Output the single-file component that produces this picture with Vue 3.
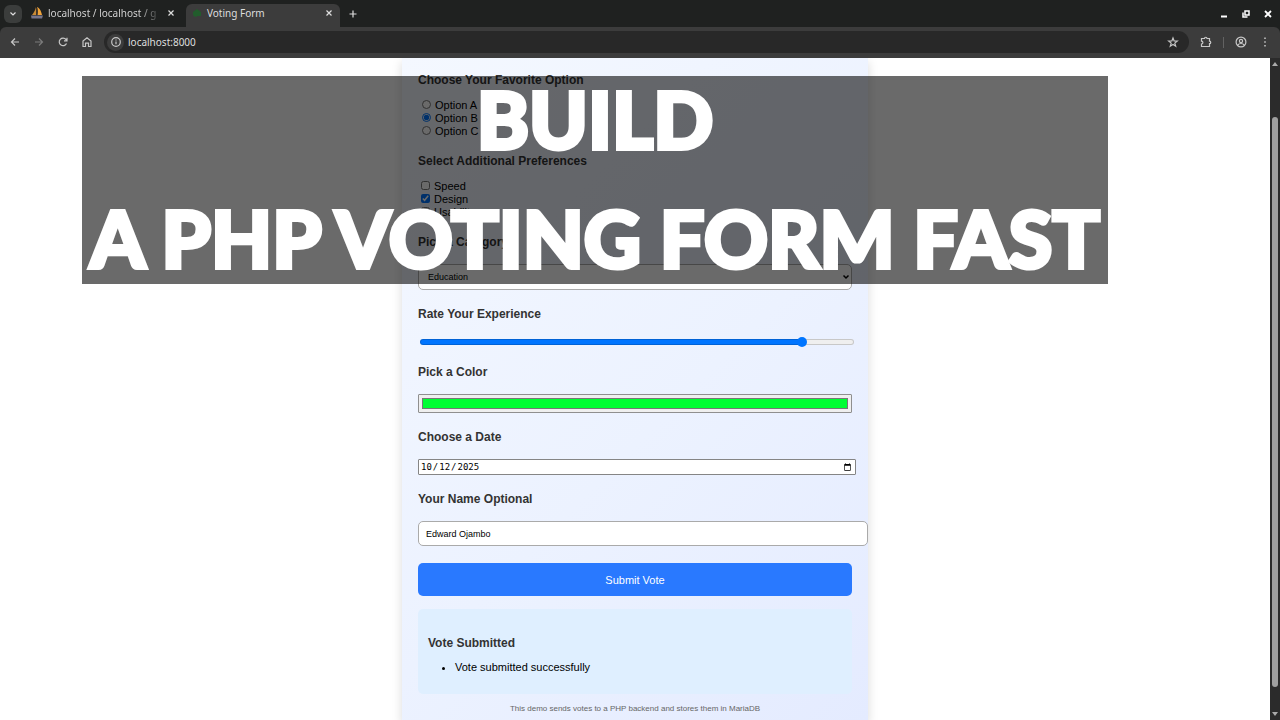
<script setup>
import { ref, computed } from 'vue'

const options = ['Option A', 'Option B', 'Option C']
const preferences = ['Speed', 'Design', 'Usability']
const option = ref('Option B')
const chosen = ref(['Design'])
const category = ref('Education')
const rating = ref(89)
const color = ref('#00ff33')
const date = ref('2025-10-12')
const name = ref('Edward Ojambo')
const url = ref('localhost:8000')
const fill = computed(() => ({ '--fill': rating.value + '%' }))
</script>

<template>
  <div class="browser">
    <header>
      <div class="tabs">
        <button class="menu" aria-label="Search tabs">
          <svg width="8" height="6" viewBox="0 0 8 6"><path d="M1.500 1.500 4 4l2.500-2.500" /></svg>
        </button>
        <div class="tab">
          <svg class="favicon" width="12" height="12" viewBox="0 0 12 12">
            <path d="M5 0v8H1C2.500 6 4 4 5 0Z" fill="#c98a35" stroke="none" />
            <path d="M6 0c3 1 4.500 5 5 8H6.500C7 5 7 3 6 0Z" fill="#f0a33a" stroke="none" />
            <path d="M0 8.500h12l-1 3H0.500Z" fill="#77758a" stroke="none" />
            <path d="M5.700 1v7.500" stroke="#4c3a2a" stroke-width="1" />
          </svg>
          <span class="name faded">localhost / localhost / g</span>
          <button aria-label="Close tab">
            <svg width="8" height="8" viewBox="0 0 8 8"><path d="m1.500 1.500 5 5m0-5-5 5" /></svg>
          </button>
        </div>
        <div class="tab active">
          <svg class="favicon" width="12" height="12" viewBox="0 0 12 12">
            <path d="M2 5 6 2l4 3v4H7L4 10 2 8Z" fill="#225c2c" stroke="none" />
          </svg>
          <span class="name">Voting Form</span>
          <button aria-label="Close tab">
            <svg width="8" height="8" viewBox="0 0 8 8"><path d="m1.500 1.500 5 5m0-5-5 5" /></svg>
          </button>
        </div>
        <button class="plus" aria-label="New tab">
          <svg width="10" height="10" viewBox="0 0 10 10"><path d="M5 1.500v7M1.500 5h7" /></svg>
        </button>
        <div class="window">
          <button aria-label="Minimize">
            <svg width="8" height="8" viewBox="0 0 8 8"><path d="M1 6.500h6" stroke-width="2" /></svg>
          </button>
          <button aria-label="Restore">
            <svg width="8" height="8" viewBox="0 0 8 8"><path d="M3 1h4v4H3ZM1 2.500V7h4.500" stroke-width="1.500" /></svg>
          </button>
          <button aria-label="Close">
            <svg width="8" height="8" viewBox="0 0 8 8"><path d="m1 1 6 6m0-6L1 7" stroke-width="1.800" /></svg>
          </button>
        </div>
      </div>
      <div class="toolbar">
        <button aria-label="Back">
          <svg width="12" height="12" viewBox="0 0 12 12"><path d="M10 6H2.500M6 2.500 2.500 6 6 9.500" /></svg>
        </button>
        <button class="dim" aria-label="Forward">
          <svg width="12" height="12" viewBox="0 0 12 12"><path d="M2 6h7.500M6 2.500 9.500 6 6 9.500" /></svg>
        </button>
        <button aria-label="Reload">
          <svg width="12" height="12" viewBox="0 0 12 12"><path d="M9.500 7.500A3.800 3.800 0 1 1 9 3.500L10 4.500M10 1.800v3H7" /></svg>
        </button>
        <button aria-label="Home">
          <svg width="12" height="12" viewBox="0 0 12 12"><path d="M2 10.500V5l4-3.300L10 5v5.500H7.500V7.200h-3v3.300Z" /></svg>
        </button>
        <div class="address">
          <button class="info" aria-label="Site information">
            <svg width="12" height="12" viewBox="0 0 12 12"><circle cx="6" cy="6" r="4.300" /><path d="M6 5.500v2.700M6 3.500v1" /></svg>
          </button>
          <input v-model="url" type="text" aria-label="Address">
          <button aria-label="Bookmark">
            <svg width="12" height="12" viewBox="0 0 12 12"><path d="m6 2 1.100 2.900 3.200.200-2.500 2 .900 3.100L6 8.500l-2.700 1.700.900-3.100-2.500-2 3.200-.200Z" /></svg>
          </button>
        </div>
        <button class="extensions" aria-label="Extensions">
          <svg width="12" height="12" viewBox="0 0 12 12"><path d="M1.500 2.500h3a1.200 1.200 0 0 1 2.500 0h2.500v2.700a1.200 1.200 0 0 1 0 2.500v2.800h-8V8a1.300 1.300 0 0 0 0-2.800Z" /></svg>
        </button>
        <span class="divider"></span>
        <button aria-label="Profile">
          <svg width="12" height="12" viewBox="0 0 12 12"><circle cx="6" cy="6" r="4.900" /><circle cx="6" cy="5" r="1.600" /><path d="M2.700 9c1.800-2 4.800-2 6.600 0" /></svg>
        </button>
        <button aria-label="Menu">
          <svg width="12" height="12" viewBox="0 0 12 12"><path d="M6 1.500v1.500M6 5.300v1.500M6 9v1.500" stroke-width="1.500" /></svg>
        </button>
      </div>
    </header>

    <div class="viewport">
      <main>
        <form class="card" @submit.prevent>
          <section>
            <h3>Choose Your Favorite Option</h3>
            <label v-for="o in options" :key="o" class="choice">
              <input v-model="option" type="radio" name="option" :value="o">{{ o }}
            </label>
          </section>
          <section>
            <h3>Select Additional Preferences</h3>
            <label v-for="p in preferences" :key="p" class="choice">
              <input v-model="chosen" type="checkbox" :value="p">{{ p }}
            </label>
          </section>
          <section class="field">
            <h3><label for="category">Pick a Category</label></h3>
            <div class="select">
              <select id="category" v-model="category">
                <option>Education</option>
                <option>Technology</option>
                <option>Health</option>
              </select>
              <svg width="8" height="6" viewBox="0 0 8 6"><path d="M1.500 1.500 4 4l2.500-2.500" /></svg>
            </div>
          </section>
          <section class="field">
            <h3><label for="rating">Rate Your Experience</label></h3>
            <input id="rating" v-model="rating" type="range" min="0" max="100" :style="fill">
          </section>
          <section class="field">
            <h3><label for="color">Pick a Color</label></h3>
            <input id="color" v-model="color" type="color">
          </section>
          <section class="field">
            <h3><label for="date">Choose a Date</label></h3>
            <input id="date" v-model="date" type="date">
          </section>
          <section class="field">
            <h3><label for="name">Your Name Optional</label></h3>
            <input id="name" v-model="name" type="text">
          </section>
          <button class="submit" type="submit">Submit Vote</button>
          <div class="result">
            <h3>Vote Submitted</h3>
            <ul><li>Vote submitted successfully</li></ul>
          </div>
          <p class="note">This demo sends votes to a PHP backend and stores them in MariaDB</p>
        </form>
      </main>
      <div class="scrollbar">
        <svg width="10" height="12" viewBox="0 0 10 12"><path d="M2 8 5 4l3 4Z" /></svg>
        <span class="thumb"></span>
        <svg width="10" height="12" viewBox="0 0 10 12"><path d="M2 4l3 4 3-4Z" /></svg>
      </div>
    </div>

    <h1 class="banner"><span>BUILD</span><span>A PHP VOTING FORM FAST</span></h1>
  </div>
</template>

<style>
body { overflow: hidden; }
</style>

<style scoped>
* { box-sizing: border-box; }
.browser {
  position: relative;
  display: flex;
  flex-direction: column;
  height: 100vh;
  overflow: hidden;
  background: #fff;
  font-family: "Liberation Sans", Arial, sans-serif;
  font-size: 11px;
}
header { background: #1f2120; color: #dedede; font-family: "Noto Sans", sans-serif; }
header button {
  display: grid;
  place-items: center;
  flex: none;
  padding: 0;
  border: 0;
  background: none;
  color: inherit;
}
header svg { flex: none; fill: none; stroke: currentColor; stroke-width: 1.2; }
.tabs { display: flex; align-items: center; height: 27px; padding-left: 4px; }
header .menu { width: 18px; height: 18px; border-radius: 6px; background: #3b3d3c; }
.tab { display: flex; align-items: center; gap: 5px; width: 164px; height: 23px; margin-top: 4px; padding: 0 11px 5px 9px; }
.tab.active { width: 154px; padding: 0 7px 5px 5px; gap: 4px; border-radius: 6px 6px 0 0; background: #3c3c3c; }
.name { flex: 1; white-space: nowrap; font-size: 10px; line-height: 16px; }
.faded { color: #cfcfcf; mask-image: linear-gradient(90deg, #000 80%, transparent); }
.plus { width: 26px; height: 26px; }
.window { display: flex; gap: 14px; margin-left: auto; padding-right: 8px; color: #fff; }
.toolbar { display: flex; align-items: center; gap: 12px; height: 31px; padding: 0 9px 1px; border-radius: 6px 6px 0 0; background: #3c3c3c; color: #c7c7c7; }
.dim { color: #7b7b7b; }
.address { display: flex; align-items: center; flex: 1; height: 22px; margin: 0 -1px; padding: 0 10px 0 3px; border-radius: 11px; background: #282828; }
header .info { width: 17px; height: 17px; border-radius: 9px; background: #3c3c3c; }
.address input { flex: 1; min-width: 0; padding: 0 4px; border: 0; outline: 0; background: none; color: #dedede; font: 10px/16px "Noto Sans", sans-serif; }
.divider { width: 1px; height: 11px; margin: 0 -1px; background: #626262; }

.viewport { display: flex; flex: 1; min-height: 0; }
main { flex: 1; overflow: hidden; }
.card {
  display: flex;
  flex-direction: column;
  gap: 17px;
  max-width: 466px;
  min-height: 100%;
  margin: 0 auto;
  padding: 15px 16px 7px;
  background: linear-gradient(135deg, #f4f8ff, #ecf2ff 55%, #e4ebff);
  box-shadow: 0 4px 10px rgba(0, 0, 0, 0.15);
}
h3 { margin: 0 0 11px; color: #333; font-size: 12px; line-height: 14px; }
.field h3 { margin-bottom: 15px; }
.field > input { display: block; }
.choice { display: flex; align-items: center; height: 13px; }
.choice input { width: 9px; height: 9px; margin: 0 4px; }
.choice input[type="checkbox"] { margin-left: 3px; }
.select { position: relative; }
.select svg { position: absolute; top: 10px; right: 2px; fill: none; stroke: #000; stroke-width: 1.5; pointer-events: none; }
select { display: block; width: 100%; height: 26px; padding: 0 9px; border: 1px solid #aaa; border-radius: 5px; background: #fff; color: #000; font: 9px "Liberation Sans", Arial, sans-serif; appearance: none; }
#rating { width: 100%; height: 12px; margin: 0 0 0 2px; appearance: none; background: none; }
#rating::-webkit-slider-runnable-track {
  height: 6px;
  border: 1px solid rgba(0, 0, 0, 0.16);
  border-radius: 3px;
  background: linear-gradient(90deg, #0075ff var(--fill), #efefef var(--fill)) border-box;
}
#rating::-webkit-slider-thumb { width: 10px; height: 10px; margin-top: -3px; appearance: none; border-radius: 50%; background: #0075ff; }
#color { width: 100%; height: 19px; padding: 3px; border: 1px solid #8f8f8f; border-radius: 1px; background: #efefef; }
#color::-webkit-color-swatch-wrapper { padding: 0; }
#color::-webkit-color-swatch { border: 1px solid #777; border-radius: 0; }
#date { box-sizing: content-box; width: 100%; height: 12px; padding: 1px; border: 1px solid #858585; border-radius: 1px; background: #fff; color: #000; font: 9px/12px "DejaVu Sans Mono", monospace; }
#date::-webkit-datetime-edit, #date::-webkit-datetime-edit-fields-wrapper { padding: 0; }
#name { box-sizing: content-box; width: 100%; height: 23px; padding: 0 7px; border: 1px solid #aaa; border-radius: 5px; background: #fff; color: #000; font: 9px "Liberation Sans", Arial, sans-serif; }
.submit { height: 33px; border: 0; border-radius: 5px; background: #2979ff; color: #fff; font: 11px "Liberation Sans", Arial, sans-serif; }
.result { height: 85px; margin-top: -4px; padding: 27px 10px 0; border-radius: 5px; background: #dfefff; }
.result h3 { margin-bottom: 10px; }
ul { margin: 0; padding-left: 27px; line-height: 14px; }
.note { margin: -7px 0 0; color: #666; font-size: 8px; line-height: 10px; text-align: center; }
.scrollbar { display: flex; flex-direction: column; align-items: center; width: 10px; background: #2b2b2b; }
.scrollbar svg { flex: none; fill: #aaa; }
.thumb { flex: 1; width: 6px; margin: 47px 0 21px; border-radius: 3px; background: #9f9f9f; }
.banner {
  position: absolute;
  top: 76px;
  left: 82px;
  right: 172px;
  display: flex;
  flex-direction: column;
  gap: 33px;
  margin: 0;
  padding-bottom: 3px;
  background: rgba(0, 0, 0, 0.585);
  color: #fff;
  font: 900 79px/86px Lato, sans-serif;
  text-align: center;
  white-space: nowrap;
  -webkit-text-stroke: 4px #fff;
}
</style>
